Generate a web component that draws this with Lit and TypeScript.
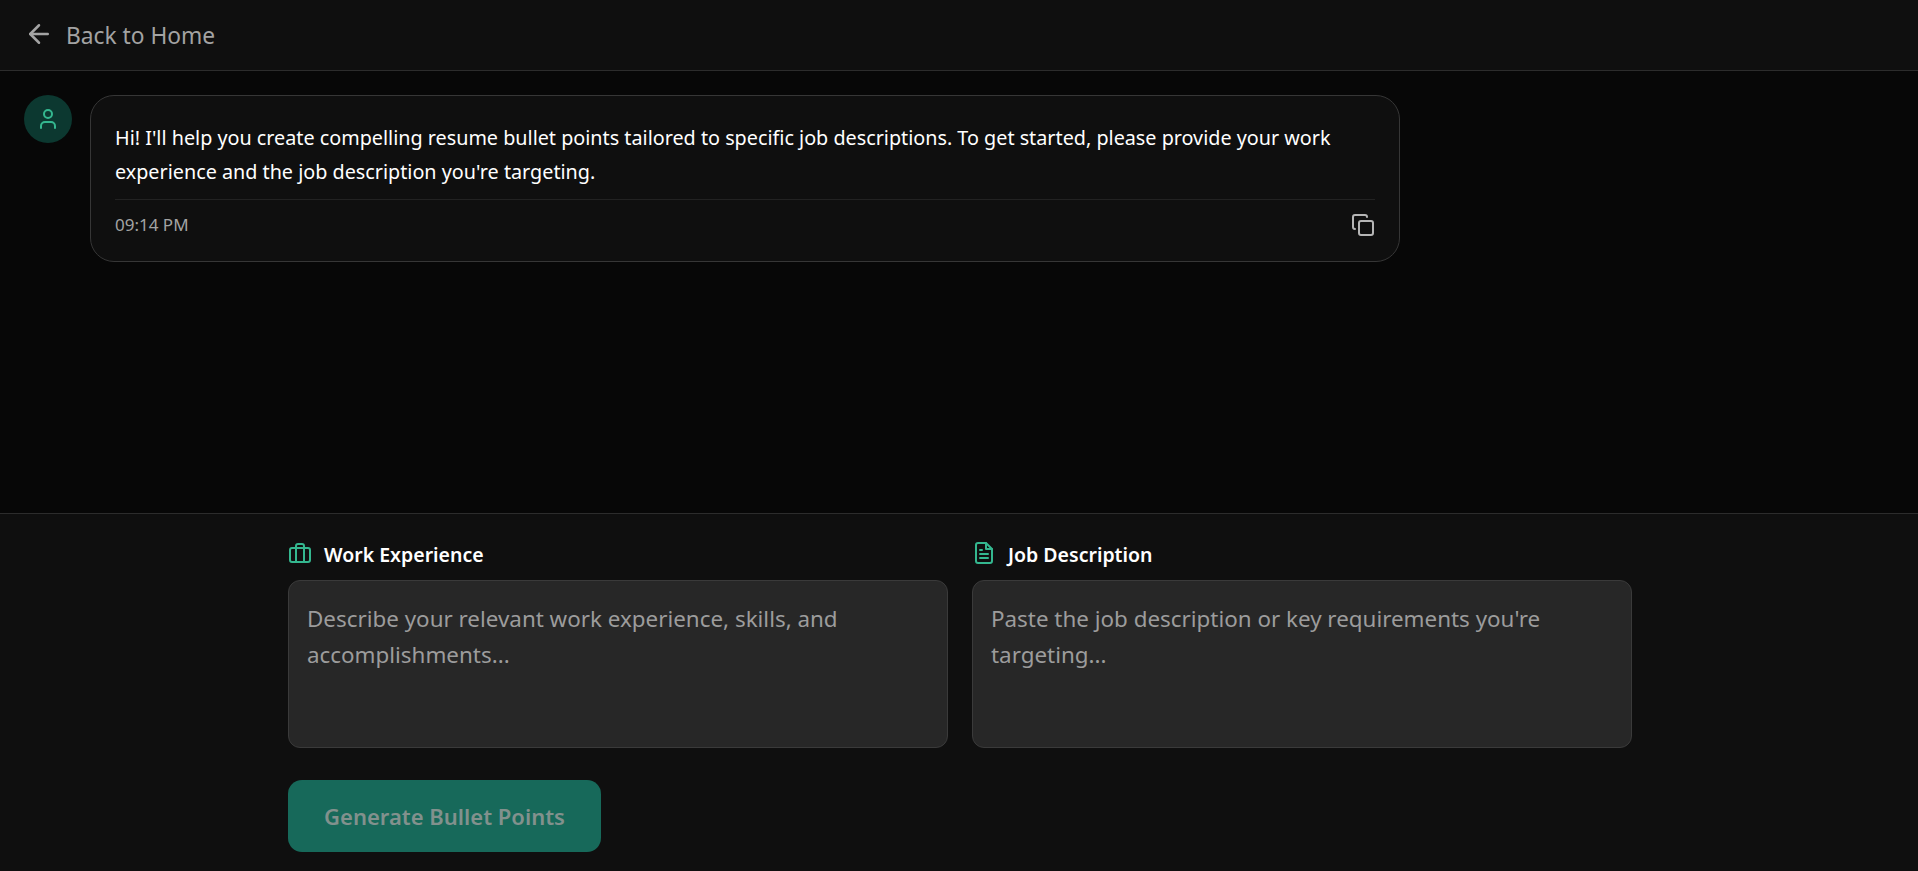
import {LitElement, html, css} from 'lit';
import {customElement} from 'lit/decorators.js';

@customElement('app-root')
export class AppRoot extends LitElement {
    static override styles = css`
      :host {
        display: flex;
        flex-direction: column;
        height: 100vh;
        overflow: hidden;
        background: #070707;
        color: #fff;
        font-family: 'Noto Sans', 'Open Sans', sans-serif;
      }
      .header {
        height: 70px;
        flex: none;
        display: flex;
        align-items: center;
        padding-left: 24px;
        gap: 12px;
        background: #0f0f0f;
        border-bottom: 1px solid #2c2c2c;
        color: #a3a3a3;
        font-size: 22.75px;
      }
      .header svg { width: 30px; height: 30px; margin-top: -2px; }
      .chat {
        flex: 1;
        padding: 24px 24px 0;
        display: flex;
        align-items: flex-start;
        gap: 18px;
      }
      .avatar {
        width: 48px;
        height: 48px;
        border-radius: 50%;
        background: #0c3830;
        color: #34b78f;
        display: flex;
        align-items: center;
        justify-content: center;
        flex: none;
      }
      .avatar svg { width: 24px; height: 24px; }
      .bubble {
        width: 1310px;
        box-sizing: border-box;
        background: #0f0f0f;
        border: 1px solid #363636;
        border-radius: 24px;
        padding: 25px 24px 0;
        height: 167px;
      }
      .bubble p {
        margin: 0;
        font-size: 19.77px;
        line-height: 34px;
      }
      .meta {
        margin-top: 10px;
        border-top: 1px solid #222;
        padding-top: 12px;
        display: flex;
        justify-content: space-between;
        align-items: center;
        font-size: 17px;
        color: #a3a3a3;
      }
      .meta svg { width: 24px; height: 24px; color: #b5b5b5; margin-top: 1px; }
      .composer {
        flex: none;
        height: 358px;
        box-sizing: border-box;
        background: #0f0f0f;
        border-top: 1px solid #2c2c2c;
        padding: 14px 286px 0 288px;
      }
      .fields {
        display: grid;
        grid-template-columns: 660px 660px;
        gap: 24px;
      }
      .label {
        display: flex;
        align-items: center;
        gap: 12px;
        height: 52px;
        font-size: 19.5px;
        font-weight: 600;
      }
      .label svg { width: 24px; height: 24px; color: #34b78f; margin-top: -3px; flex: none; }
      .input {
        box-sizing: border-box;
        height: 168px;
        background: #272727;
        border: 1px solid #3a3a3a;
        border-radius: 12px;
        padding: 20px 18px;
        font-size: 22.4px;
        line-height: 36px;
        color: #9c9c9c;
      }
      .submit {
        display: block;
        margin-top: 32px;
        width: 313px;
        height: 72px;
        border: none;
        border-radius: 14px;
        background: #17695a;
        color: #82918d;
        font: 600 22px 'Noto Sans', 'Open Sans', sans-serif;
        padding: 0;
      }
    `;

    override render() {
        return html`
            <div class="header">
                <svg viewBox="0 0 24 24" fill="none" stroke="currentColor" stroke-width="2" stroke-linecap="round" stroke-linejoin="round">
                    <path d="M19 12H5"/><path d="M12 19l-7-7 7-7"/>
                </svg>
                <span>Back to Home</span>
            </div>
            <div class="chat">
                <div class="avatar">
                    <svg viewBox="0 0 24 24" fill="none" stroke="currentColor" stroke-width="2" stroke-linecap="round" stroke-linejoin="round">
                        <circle cx="12" cy="7" r="4"/><path d="M19 21v-2a4 4 0 0 0-4-4H9a4 4 0 0 0-4 4v2"/>
                    </svg>
                </div>
                <div class="bubble">
                    <p>Hi! I'll help you create compelling resume bullet points tailored to specific job descriptions. To get started, please provide your work experience and the job description you're targeting.</p>
                    <div class="meta">
                        <span>09:14 PM</span>
                        <svg viewBox="0 0 24 24" fill="none" stroke="currentColor" stroke-width="2" stroke-linecap="round" stroke-linejoin="round">
                            <rect x="8" y="8" width="14" height="14" rx="2"/>
                            <path d="M4 16c-1.1 0-2-.9-2-2V4c0-1.1.9-2 2-2h10c1.1 0 2 .9 2 2"/>
                        </svg>
                    </div>
                </div>
            </div>
            <div class="composer">
                <div class="fields">
                    <div>
                        <div class="label">
                            <svg viewBox="0 0 24 24" fill="none" stroke="currentColor" stroke-width="2" stroke-linecap="round" stroke-linejoin="round">
                                <rect x="2" y="7" width="20" height="14" rx="2"/>
                                <path d="M16 21V5a2 2 0 0 0-2-2h-4a2 2 0 0 0-2 2v16"/>
                            </svg>
                            <span>Work Experience</span>
                        </div>
                        <div class="input">Describe your relevant work experience, skills, and accomplishments...</div>
                    </div>
                    <div>
                        <div class="label">
                            <svg viewBox="0 0 24 24" fill="none" stroke="currentColor" stroke-width="2" stroke-linecap="round" stroke-linejoin="round">
                                <path d="M14 2H6a2 2 0 0 0-2 2v16a2 2 0 0 0 2 2h12a2 2 0 0 0 2-2V8z"/>
                                <path d="M14 2v6h6"/><path d="M16 13H8"/><path d="M16 17H8"/><path d="M10 9H8"/>
                            </svg>
                            <span>Job Description</span>
                        </div>
                        <div class="input">Paste the job description or key requirements you're targeting...</div>
                    </div>
                </div>
                <button class="submit">Generate Bullet Points</button>
            </div>
    `;
    }
}

declare global {
    interface HTMLElementTagNameMap {
        'app-root': AppRoot;
    }
}
